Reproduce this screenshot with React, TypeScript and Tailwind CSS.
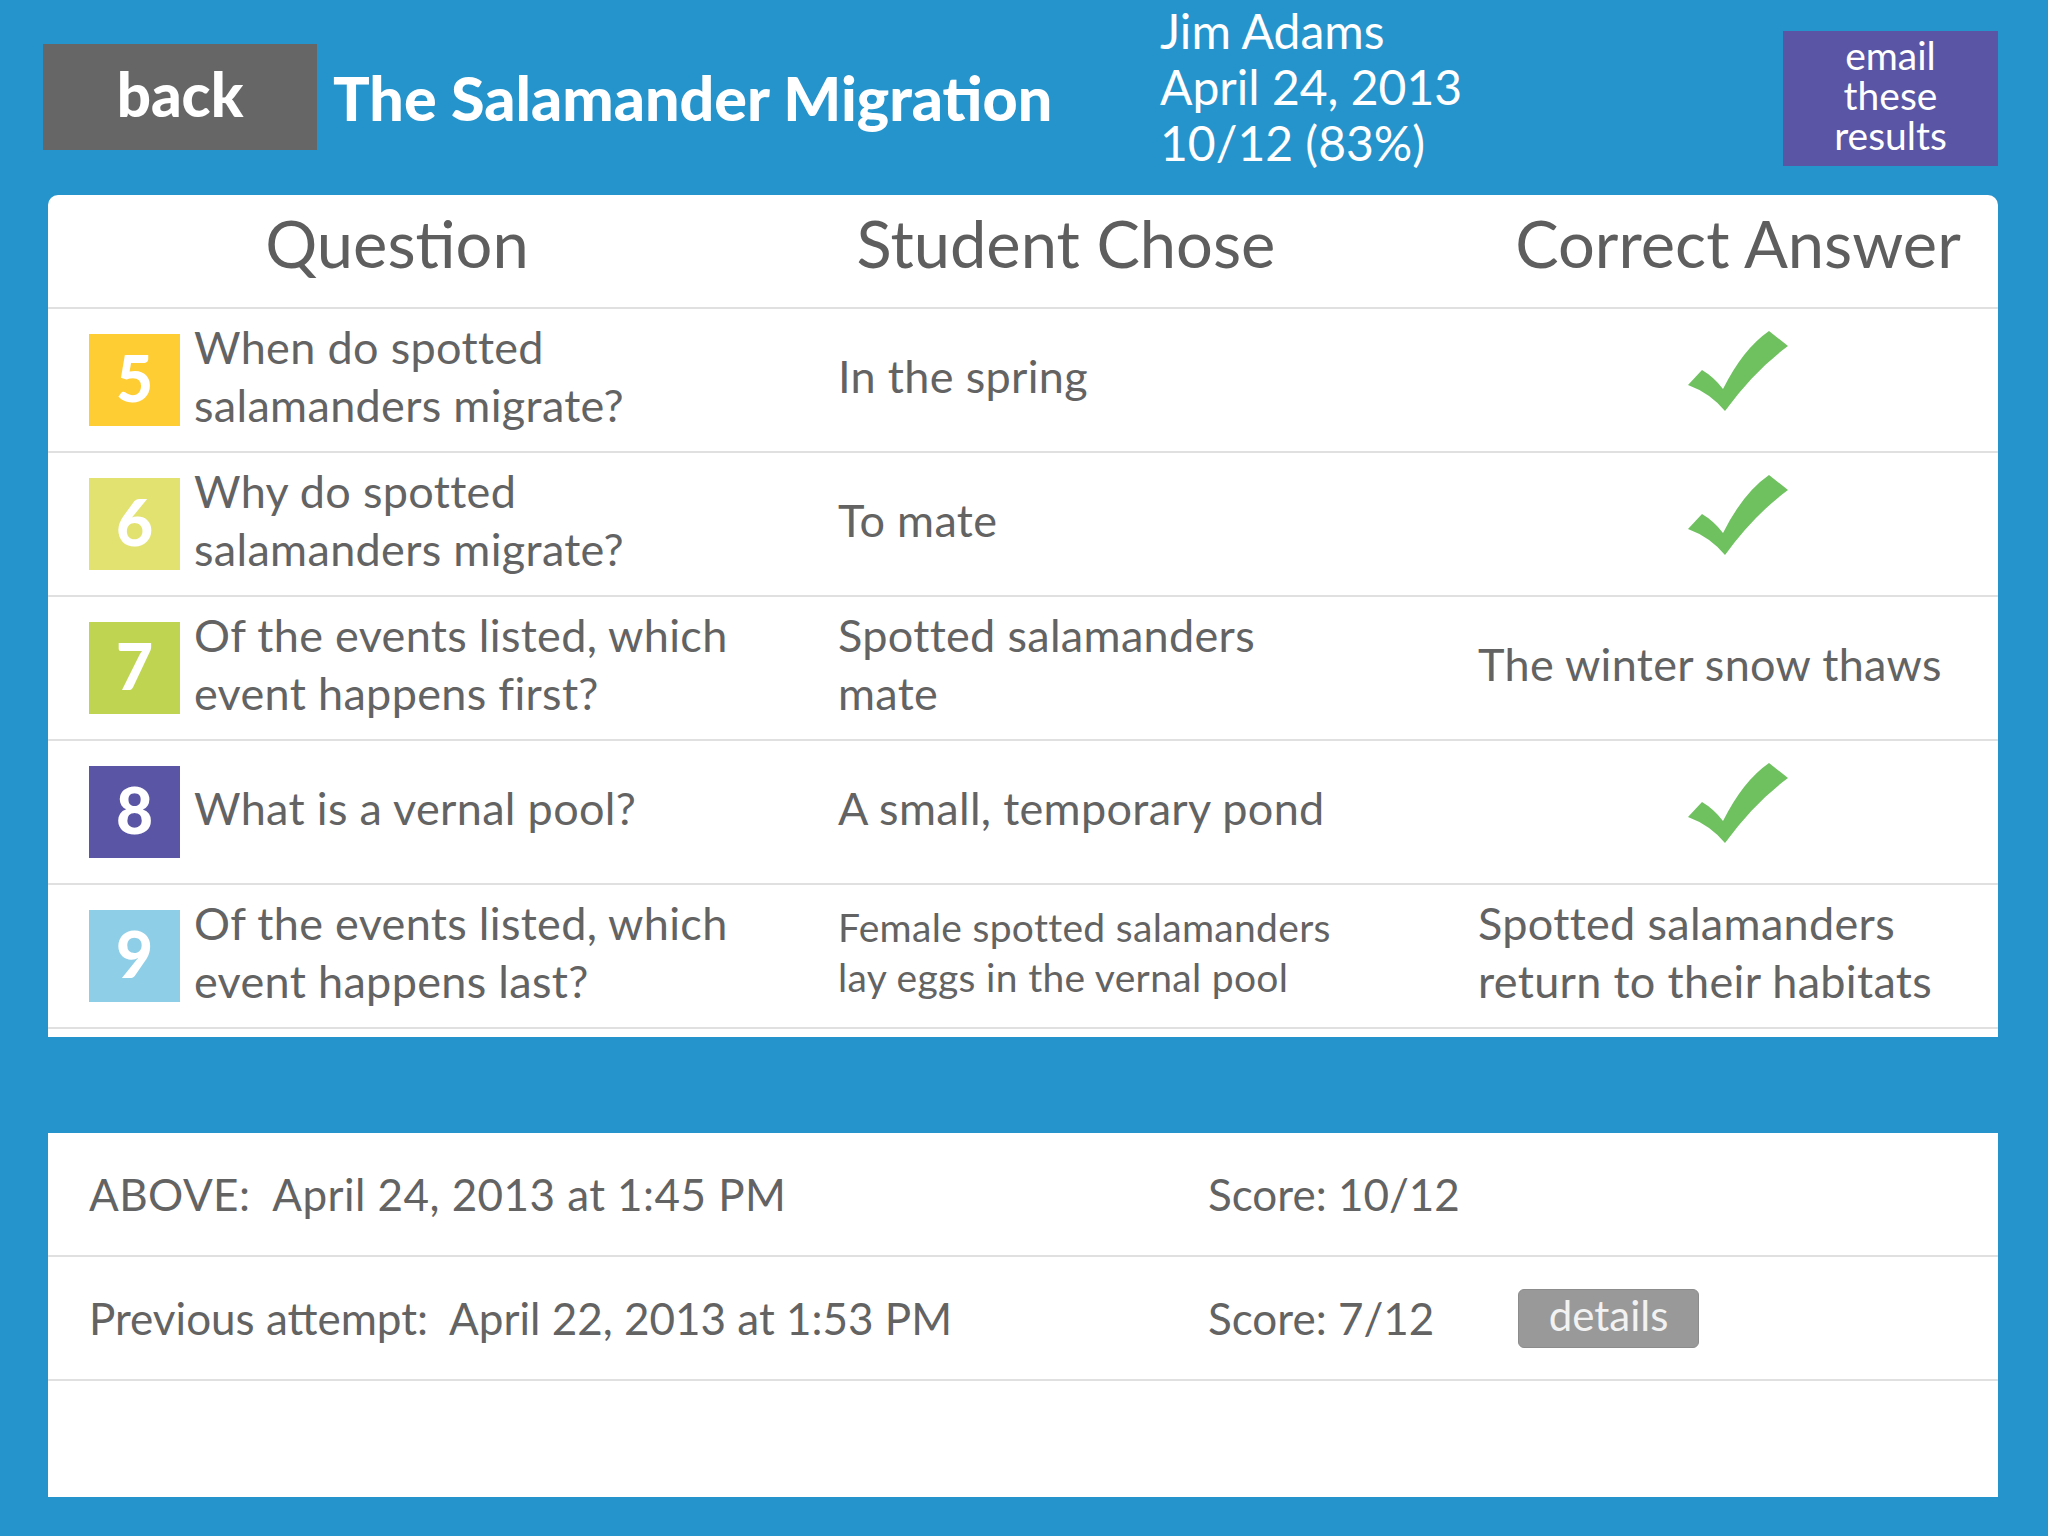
import React from "react";

const font = { fontFamily: '"Lato", "Liberation Sans", sans-serif' };

function Check() {
  return (
    <svg width="100" height="80" viewBox="0 0 100 80" className="mb-[18px]">
      <path
        d="M0 54 L14 39 Q26 46 35 58 Q55 18 81 0 L100 15 Q66 40 37 80 Q22 62 0 54 Z"
        fill="#6fc160"
      />
    </svg>
  );
}

type Row = {
  n: string;
  color: string;
  q: React.ReactNode;
  chose: React.ReactNode;
  small?: boolean;
  answer: React.ReactNode | null;
};

const rows: Row[] = [
  { n: "5", color: "bg-[#fecc33]", q: <>When do spotted<br />salamanders migrate?</>, chose: "In the spring", answer: null },
  { n: "6", color: "bg-[#e2e271]", q: <>Why do spotted<br />salamanders migrate?</>, chose: "To mate", answer: null },
  { n: "7", color: "bg-[#bfd451]", q: <>Of the events listed, which<br />event happens first?</>, chose: <>Spotted salamanders<br />mate</>, answer: "The winter snow thaws" },
  { n: "8", color: "bg-[#5a55a4]", q: "What is a vernal pool?", chose: "A small, temporary pond", answer: null },
  { n: "9", color: "bg-[#8ecee7]", q: <>Of the events listed, which<br />event happens last?</>, chose: <>Female spotted salamanders<br />lay eggs in the vernal pool</>, small: true, answer: <>Spotted salamanders<br />return to their habitats</> },
];

export default function App() {
  return (
    <div className="w-[2048px] h-[1536px] bg-[#2594cc] overflow-hidden flex flex-col" style={font}>
      {/* Header */}
      <div className="flex h-[195px] shrink-0">
        <div className="w-[1160px] shrink-0 flex items-center gap-[16px] pl-[43px] pt-[44px] h-[150px]">
          <div className="w-[274px] h-[106px] bg-[#666666] flex items-center justify-center text-white font-black text-[60px] leading-none pb-[6px]">
            back
          </div>
          <div className="text-white font-black text-[61px] leading-none whitespace-nowrap">
            The Salamander Migration
          </div>
        </div>
        <div className="pt-[3px] text-white text-[48px] leading-[56px] whitespace-nowrap">
          <div>Jim Adams</div>
          <div>April 24, 2013</div>
          <div>10/12 (83%)</div>
        </div>
        <div className="ml-auto mr-[50px] mt-[31px] w-[215px] h-[135px] bg-[#5b55a5] flex items-center justify-center text-center text-white text-[39px] leading-[40px] pb-[8px]">
          <div>
            email
            <br />
            these
            <br />
            results
          </div>
        </div>
      </div>

      {/* Results table */}
      <div className="ml-[48px] mr-[50px] bg-white rounded-t-[10px] pb-[8px] text-[#636363] tracking-[0.02em]">
        <div className="grid grid-cols-[790px_640px_1fr] h-[114px] border-b-2 border-[#e0e0e0] items-center text-[65px] text-[#5e5e5e] tracking-normal">
          <div className="text-center pr-[92px] pb-[32px]">Question</div>
          <div className="text-center pr-[184px] pb-[32px]">Student Chose</div>
          <div className="text-center pb-[32px]">Correct Answer</div>
        </div>
        {rows.map((r) => (
          <div
            key={r.n}
            className="grid grid-cols-[790px_640px_1fr] h-[144px] border-b-2 border-[#e0e0e0] items-center"
          >
            <div className="flex items-center pl-[41px] gap-[14px]">
              <div className={`w-[91px] h-[92px] shrink-0 ${r.color} flex items-center justify-center text-white font-black text-[64px] leading-none pb-[4px] tracking-normal`}>
                {r.n}
              </div>
              <div className="text-[45px] leading-[58px] mb-[8px]">{r.q}</div>
            </div>
            <div className={r.small ? "text-[39px] leading-[50px] mb-[8px]" : "text-[45px] leading-[58px] mb-[8px]"}>
              {r.chose}
            </div>
            <div className="flex items-center">
              {r.answer ? (
                <div className="text-[45px] leading-[58px] mb-[8px]">{r.answer}</div>
              ) : (
                <div className="w-full flex justify-center">
                  <Check />
                </div>
              )}
            </div>
          </div>
        ))}
      </div>

      {/* Attempts */}
      <div className="mt-[96px] ml-[48px] mr-[50px] h-[364px] bg-white text-[#636363] text-[44px]">
        <div className="flex items-center h-[124px] border-b-2 border-[#e0e0e0] pl-[41px]">
          <div className="w-[1119px] whitespace-pre tracking-[0.01em]">ABOVE:  April 24, 2013 at 1:45 PM</div>
          <div>Score: 10/12</div>
        </div>
        <div className="flex items-center h-[124px] border-b-2 border-[#e0e0e0] pl-[41px]">
          <div className="w-[1119px] whitespace-pre">Previous attempt:  April 22, 2013 at 1:53 PM</div>
          <div className="w-[310px]">Score: 7/12</div>
          <div className="w-[181px] h-[59px] rounded-[6px] bg-[#999999] border border-[#8c8c8c] text-[#f2f2f2] text-[42px] flex items-center justify-center pb-[5px]">
            details
          </div>
        </div>
      </div>
    </div>
  );
}
